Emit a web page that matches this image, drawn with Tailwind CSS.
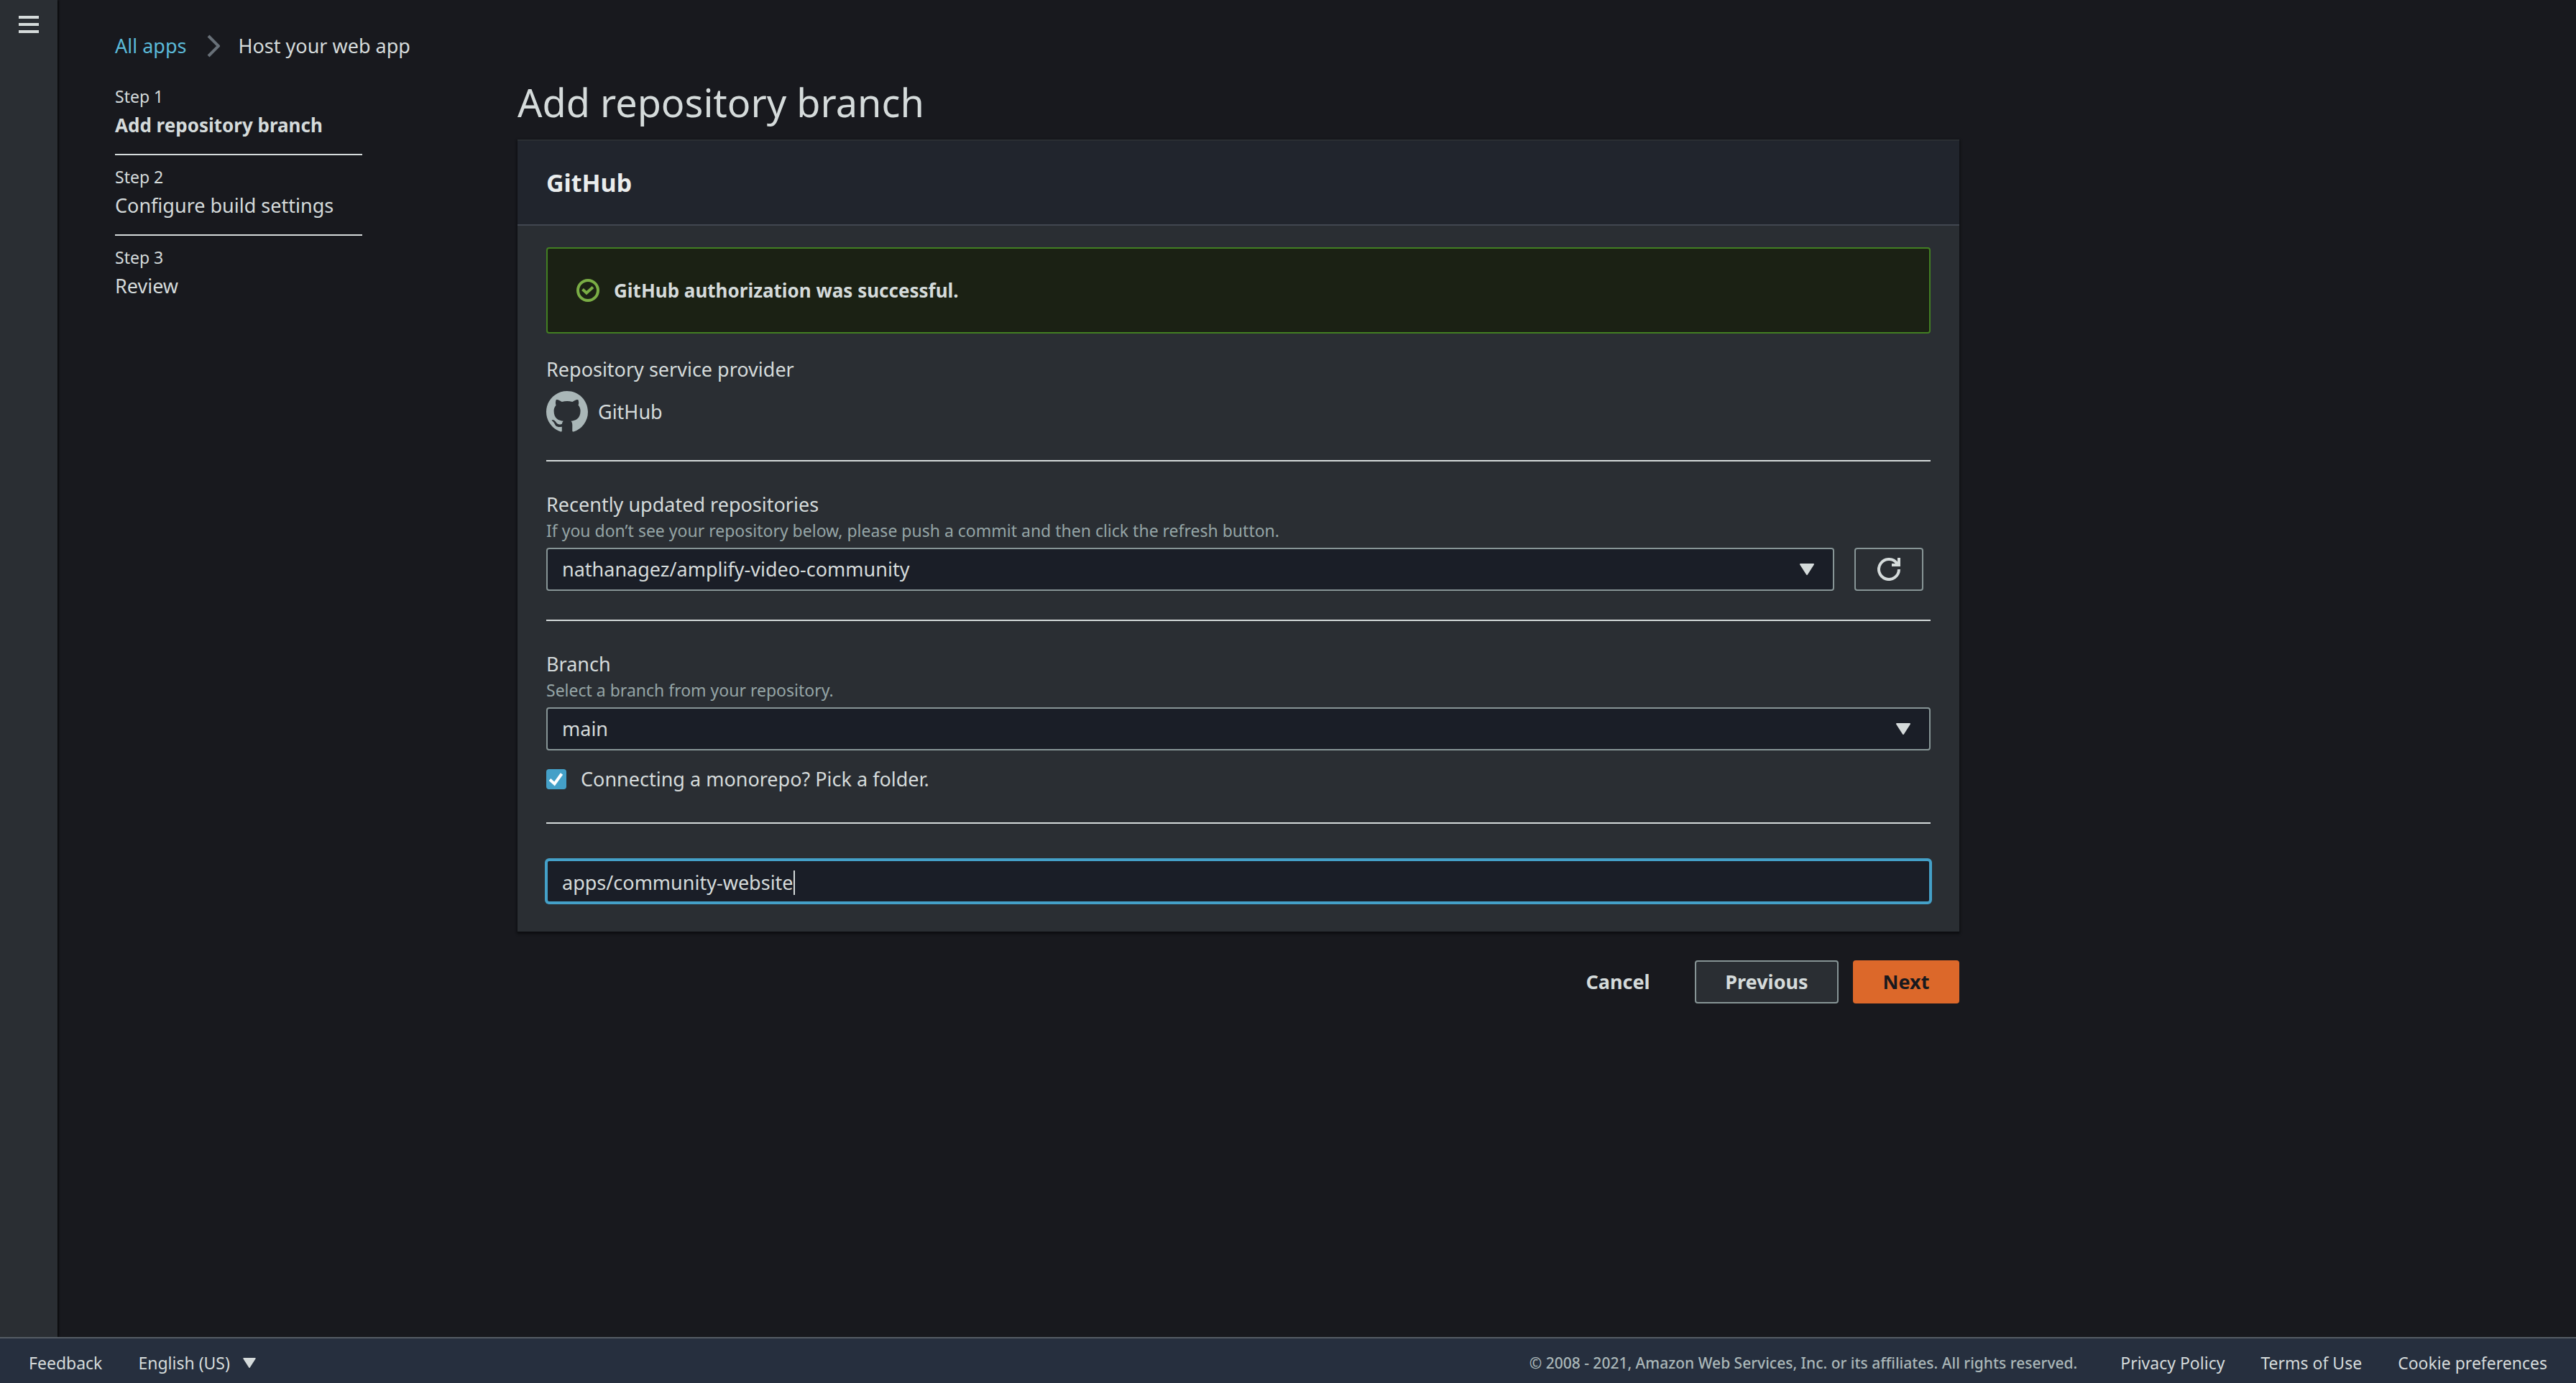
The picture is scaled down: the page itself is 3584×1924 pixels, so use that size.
<!DOCTYPE html>
<html lang="en">
<head>
<meta charset="utf-8">
<title>Host your web app</title>
<script src="https://cdn.jsdelivr.net/npm/@tailwindcss/browser@4"></script>
</head>
<body class="flex min-h-screen flex-col bg-[#18191e] font-['Noto_Sans','Open_Sans',sans-serif] text-[27px] leading-10 text-[#d5dbdb]">
  <div class="flex flex-1">
    <div class="z-10 w-20 shrink-0 bg-[#2a2e33] pt-[22px] shadow-[1px_0_3px_#000]">
      <button type="button" aria-label="Open navigation" class="mx-auto flex w-7 flex-col gap-1.5">
        <span class="h-1 w-full bg-[#d5dbdb]"></span>
        <span class="h-1 w-full bg-[#d5dbdb]"></span>
        <span class="h-1 w-full bg-[#d5dbdb]"></span>
      </button>
    </div>

    <div class="flex-1 px-20 pt-11">
      <nav aria-label="Breadcrumb" class="flex items-center gap-[26px]">
        <a href="#" class="text-[#5bb9d8]">All apps</a>
        <svg class="h-8 w-5" viewBox="0 0 20 32" fill="none" stroke="#687078" stroke-width="4"><path d="M4 2 L18 16 L4 30"/></svg>
        <span>Host your web app</span>
      </nav>

      <div class="mt-[22px] flex">
        <ol class="w-[344px] shrink-0 pt-2">
          <li class="border-b-2 border-[#d5dbdb] pb-5">
            <div class="text-[23px]">Step 1</div>
            <div class="text-[26px] font-bold">Add repository branch</div>
          </li>
          <li class="mt-2.5 border-b-2 border-[#d5dbdb] pb-5">
            <div class="text-[23px]">Step 2</div>
            <div>Configure build settings</div>
          </li>
          <li class="mt-2.5">
            <div class="text-[23px]">Step 3</div>
            <div>Review</div>
          </li>
        </ol>

        <main class="ml-[216px] max-w-[2006px] flex-1">
          <h1 class="mb-4 text-[54px] leading-[72px]">Add repository branch</h1>

          <section class="bg-[#2a2e33] shadow-[0_2px_3px_1px_#0c0d10]">
            <h2 class="border-y-2 border-t-[#2a2e33] border-b-[#414750] bg-[#21252d] px-10 py-[38px] text-[34px] font-bold text-[#eaeded]">GitHub</h2>

            <div class="px-10 pt-[30px] pb-10">
              <div role="status" class="flex items-center gap-5 rounded-sm border-2 border-[#427f22] bg-[#1b2114] px-10 py-[38px] text-[26px] font-bold">
                <svg class="size-8" viewBox="0 0 32 32" fill="none" stroke="#7aad45" stroke-width="4"><circle cx="16" cy="16" r="14"/><path d="M8.5 14.5 L14 19.5 L23 11.5"/></svg>
                <span>GitHub authorization was successful.</span>
              </div>

              <div class="mt-[30px]">Repository service provider</div>
              <div class="mt-2.5 flex items-center gap-3.5">
                <svg class="size-[58px]" viewBox="0 0 16 16" fill="#aab7b8"><path d="M8 0C3.58 0 0 3.58 0 8c0 3.54 2.29 6.53 5.47 7.59.4.07.55-.17.55-.38 0-.19-.01-.82-.01-1.49-2.01.37-2.53-.49-2.69-.94-.09-.23-.48-.94-.82-1.13-.28-.15-.68-.52-.01-.53.63-.01 1.08.58 1.23.82.72 1.21 1.87.87 2.33.66.07-.52.28-.87.51-1.07-1.78-.2-3.64-.89-3.64-3.95 0-.87.31-1.59.82-2.15-.08-.2-.36-1.02.08-2.12 0 0 .67-.21 2.2.82.64-.18 1.32-.27 2-.27s1.36.09 2 .27c1.53-1.04 2.2-.82 2.2-.82.44 1.1.16 1.92.08 2.12.51.56.82 1.27.82 2.15 0 3.07-1.87 3.75-3.65 3.95.29.25.54.73.54 1.48 0 1.07-.01 1.93-.01 2.2 0 .21.15.46.55.38A8.01 8.01 0 0 0 16 8c0-4.42-3.58-8-8-8z"/></svg>
                <span>GitHub</span>
              </div>

              <hr class="mt-[38px] mb-10 border-t-2 border-[#d5dbdb]">

              <label for="repo" class="block">Recently updated repositories</label>
              <p class="text-[23px] leading-8 text-[#95a5a6]">If you don’t see your repository below, please push a commit and then click the refresh button.</p>
              <div class="mt-2 flex gap-7 pr-2.5">
                <div class="relative flex-1">
                  <select id="repo" class="h-[60px] w-full appearance-none rounded-sm border-2 border-[#879596] bg-[#1a1e27] px-5"><option>nathanagez/amplify-video-community</option></select>
                  <svg class="pointer-events-none absolute top-[22px] right-7 h-4 w-5" viewBox="0 0 20 16" fill="#d5dbdb" stroke="#d5dbdb" stroke-width="2" stroke-linejoin="round"><path d="M1 1 H19 L10 15 Z"/></svg>
                </div>
                <button type="button" aria-label="Refresh" class="flex h-[60px] w-24 items-center justify-center rounded-sm border-2 border-[#879596]">
                  <svg class="size-8" viewBox="0 0 32 32" fill="none" stroke="#d5dbdb" stroke-width="4"><path d="M30 16 A14 14 0 1 1 27.500 8 L29 10"/><path d="M30 0 V10 H20"/></svg>
                </button>
              </div>

              <hr class="my-10 border-t-2 border-[#d5dbdb]">

              <label for="branch" class="block">Branch</label>
              <p class="text-[23px] leading-8 text-[#95a5a6]">Select a branch from your repository.</p>
              <div class="relative mt-2">
                <select id="branch" class="block h-[60px] w-full appearance-none rounded-sm border-2 border-[#879596] bg-[#1a1e27] px-5"><option>main</option></select>
                <svg class="pointer-events-none absolute top-[22px] right-7 h-4 w-5" viewBox="0 0 20 16" fill="#d5dbdb" stroke="#d5dbdb" stroke-width="2" stroke-linejoin="round"><path d="M1 1 H19 L10 15 Z"/></svg>
              </div>

              <div class="mt-5 flex items-center gap-5">
                <span class="relative size-7">
                  <input id="monorepo" type="checkbox" checked class="block size-7 appearance-none rounded-sm bg-[#44a0c8]">
                  <svg class="pointer-events-none absolute inset-0 size-7" viewBox="0 0 28 28" fill="none" stroke="#fff" stroke-width="4"><path d="M5 14.500 L11.500 20.500 L21.500 6.500"/></svg>
                </span>
                <label for="monorepo">Connecting a monorepo? Pick a folder.</label>
              </div>

              <hr class="mt-10 mb-[50px] border-t-2 border-[#d5dbdb]">

              <div class="flex h-[60px] items-center rounded-sm border-2 border-[#44a0c8] bg-[#1a1e27] px-5 pt-1 ring-2 ring-[#44a0c8]">
                <input type="text" aria-label="Monorepo folder" value="apps/community-website" class="field-sizing-content caret-transparent outline-none">
                <span class="h-[34px] w-0.5 bg-[#d5dbdb]"></span>
              </div>
            </div>
          </section>

          <div class="mt-10 flex justify-end text-[27px] font-bold">
            <button type="button" class="mr-2.5 h-[60px] w-[146px]">Cancel</button>
            <button type="button" class="ml-6 h-[60px] w-[200px] rounded-sm border-2 border-[#879596] bg-[#2a2e33]">Previous</button>
            <button type="button" class="ml-5 h-[60px] w-[148px] rounded-sm bg-[#dc682a] text-[#18191e]">Next</button>
          </div>
        </main>
      </div>
    </div>
  </div>

  <footer class="z-20 flex h-16 items-center border-t-2 border-[#545b64] bg-[#262f3e] px-10 pt-1.5 text-[23px]">
    <a href="#">Feedback</a>
    <button type="button" class="ml-[50px] flex items-center gap-[18px]">English (US)
      <svg class="h-3.5 w-[18px]" viewBox="0 0 20 16" fill="#d5dbdb" stroke="#d5dbdb" stroke-width="2" stroke-linejoin="round"><path d="M1 1 H19 L10 15 Z"/></svg>
    </button>
    <span class="ml-auto text-[21px] font-medium text-[#aab7b8]">© 2008 - 2021, Amazon Web Services, Inc. or its affiliates. All rights reserved.</span>
    <a href="#" class="ml-[60px]">Privacy Policy</a>
    <a href="#" class="ml-[50px]">Terms of Use</a>
    <a href="#" class="ml-[50px]">Cookie preferences</a>
  </footer>
</body>
</html>
